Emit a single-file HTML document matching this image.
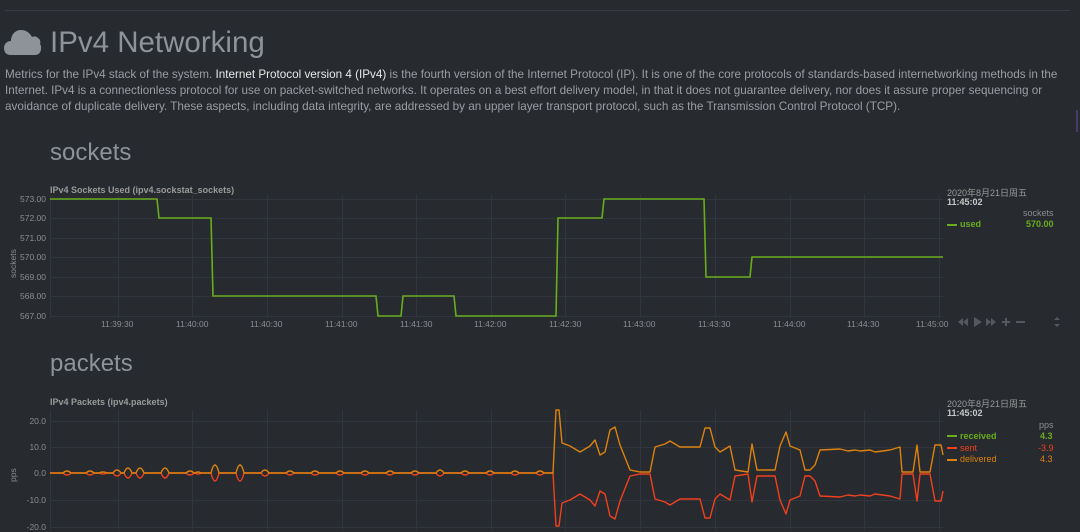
<!DOCTYPE html>
<html><head><meta charset="utf-8"><style>
body{margin:0;width:1080px;height:531px;overflow:hidden;background:#272a2f;font-family:"Liberation Sans","Noto Sans CJK SC",sans-serif;position:relative;color:#9a9da2}
.a{position:absolute;white-space:nowrap}
.p{font-size:11.7px;line-height:16px;color:#9a9da2}
.p b{color:#e8e8e8;font-weight:normal}
.h{font-size:24px;color:#8d9399}
.t{font-size:9px;font-weight:bold;color:#9a9a9a}
.y{font-size:8.5px;color:#8a8d92;text-align:right;width:44px}
.x{font-size:8.5px;color:#8a8d92}
.lg{font-size:9px}
</style></head><body>
<div class="a" style="left:5px;top:10px;width:1065px;height:1px;background:#3a3e44"></div>
<svg class="a" style="left:4px;top:28px" width="38" height="28" viewBox="0 0 38 28"><path d="M7 27 C2 27 0 24 0 20 C0 16 3 13 7 13 C7 7 11 2 17 2 C22 2 26 5 28 9 C30 8 32 8 34 10 C36 11 37 14 36 16 C38 18 38 27 31 27 Z" fill="#8d9399"/></svg>
<div class="a" style="left:50px;top:26px;font-size:29.5px;color:#8d9399">IPv4 Networking</div>
<div class="a p" style="left:5px;top:67px;white-space:normal;width:1068px">Metrics for the IPv4 stack of the system. <b>Internet Protocol version 4 (IPv4)</b> is the fourth version of the Internet Protocol (IP). It is one of the core protocols of standards-based internetworking methods in the Internet. IPv4 is a connectionless protocol for use on packet-switched networks. It operates on a best effort delivery model, in that it does not guarantee delivery, nor does it assure proper sequencing or avoidance of duplicate delivery. These aspects, including data integrity, are addressed by an upper layer transport protocol, such as the Transmission Control Protocol (TCP).</div>
<div class="a" style="left:1076px;top:110px;width:2px;height:22px;background:#4a3a6a"></div>

<div class="a h" style="left:50px;top:139px">sockets</div>
<div class="a t" style="left:50px;top:185px">IPv4 Sockets Used (ipv4.sockstat_sockets)</div>
<div class="a h" style="left:50px;top:350px">packets</div>
<div class="a t" style="left:50px;top:397px">IPv4 Packets (ipv4.packets)</div>

<svg class="a" style="left:0;top:0" width="1080" height="531">
<g stroke="#31363c" stroke-width="1">
<line x1="50" y1="199.5" x2="943" y2="199.5"/><line x1="50" y1="218.5" x2="943" y2="218.5"/><line x1="50" y1="238.5" x2="943" y2="238.5"/><line x1="50" y1="257.5" x2="943" y2="257.5"/><line x1="50" y1="277.5" x2="943" y2="277.5"/><line x1="50" y1="296.5" x2="943" y2="296.5"/><line x1="50" y1="316.5" x2="943" y2="316.5"/>
<line x1="50" y1="421.5" x2="943" y2="421.5"/><line x1="50" y1="447.5" x2="943" y2="447.5"/><line x1="50" y1="500.5" x2="943" y2="500.5"/><line x1="50" y1="527.5" x2="943" y2="527.5"/>
</g>
<g stroke="#31363c" stroke-width="1">
<path d="M50.5 195V318M118.5 195V318M192.5 195V318M267.5 195V318M342.5 195V318M416.5 195V318M491.5 195V318M565.5 195V318M640.5 195V318M715.5 195V318M790.5 195V318M864.5 195V318M939.5 195V318"/>
<path d="M50.5 410V531M118.5 410V531M192.5 410V531M267.5 410V531M342.5 410V531M416.5 410V531M491.5 410V531M565.5 410V531M640.5 410V531M715.5 410V531M790.5 410V531M864.5 410V531M939.5 410V531"/>
</g>
<path d="M50 199H157L159 218H211L213 296H376L378 316H401L403 296H454L456 316H556L558 218H602L604 199H704L706 277H750L752 257H943" fill="none" stroke="#6aac1e" stroke-width="1.6"/>
<path d="M50 473L63 473Q67 477 71 473L86 473Q90 477 94 473L99 473Q103 475 107 473L113 473Q117 479 121 473L124 473Q128 483 132 473L136 473Q140 483 144 473L161 473Q165 483 169 473L186 473Q190 477 194 473L195 473Q198 475 201 473L211 473Q215 489 219 473L236 473Q240 489 244 473L261 473Q265 479 269 473L286 473Q290 477 294 473L311 473Q315 477 319 473L336 473Q340 477 344 473L361 473Q365 477 369 473L386 473Q390 477 394 473L411 473Q415 477 419 473L436 473Q440 479 444 473L461 473Q465 477 469 473L486 473Q490 477 494 473L511 473Q515 477 519 473L536 473Q540 477 544 473L553 473 L556 526 559 526 562 503 570 500 580 494 590 500 595 506 600 491 605 494 610 516 615 519 620 501 630 476 640 474 650 474 655 499 665 502 670 505 680 499 690 499 700 499 705 518 710 518 715 499 720 494 730 500 735 476 748 474 752 502 757 476 775 476 780 500 786 514 790 500 800 496 805 476 810 476 815 481 820 496 840 497 848 495 855 496 860 495 870 496 875 494 890 496 900 499 902 474 913 474 917 501 920 474 930 474 935 501 941 501 943 491" fill="none" stroke="#f0401e" stroke-width="1.4" stroke-linejoin="round"/>
<path d="M50 473L63 473Q67 469 71 473L86 473Q90 469 94 473L99 473Q103 471 107 473L113 473Q117 467 121 473L124 473Q128 463 132 473L136 473Q140 463 144 473L161 473Q165 463 169 473L186 473Q190 469 194 473L195 473Q198 471 201 473L211 473Q215 457 219 473L236 473Q240 457 244 473L261 473Q265 467 269 473L286 473Q290 469 294 473L311 473Q315 469 319 473L336 473Q340 469 344 473L361 473Q365 469 369 473L386 473Q390 469 394 473L411 473Q415 469 419 473L436 473Q440 467 444 473L461 473Q465 469 469 473L486 473Q490 469 494 473L511 473Q515 469 519 473L536 473Q540 469 544 473L553 473 L556 410 559 410 562 443 570 446 580 452 590 446 595 440 600 455 605 452 610 430 615 427 620 445 630 470 640 472 650 472 655 447 665 444 670 441 680 447 690 447 700 447 705 428 710 428 715 447 720 452 730 446 735 470 748 472 752 444 757 470 775 470 780 446 786 432 790 446 800 450 805 470 810 470 815 465 820 450 840 449 848 451 855 450 860 451 870 450 875 452 890 450 900 447 902 472 913 472 917 445 920 472 930 472 935 445 941 445 943 455" fill="none" stroke="#dc820e" stroke-width="1.4" stroke-linejoin="round"/>
<g fill="#55595f">
<path d="M958 322l5 4v-8zM963 322l5 4v-8z"/><path d="M974 317l8 5-8 5z"/><path d="M986 318l5 4-5 4zM991 318l5 4-5 4z"/><path d="M1002 321h8v2h-8zM1005 318h2v8h-2z"/><path d="M1016 321h9v2h-9z"/><path d="M1054 320l3-3 3 3zM1054 324l3 3 3-3z"/>
</g>
</svg>
<div class="a x" style="left:8px;transform:rotate(-90deg);transform-origin:left top;top:278px">sockets</div>
<div class="a y" style="left:2px;top:194px">573.00</div>
<div class="a y" style="left:2px;top:213px">572.00</div>
<div class="a y" style="left:2px;top:233px">571.00</div>
<div class="a y" style="left:2px;top:252px">570.00</div>
<div class="a y" style="left:2px;top:272px">569.00</div>
<div class="a y" style="left:2px;top:291px">568.00</div>
<div class="a y" style="left:2px;top:311px">567.00</div>
<div class="a x" style="left:101px;top:319px">11:39:30</div>
<div class="a x" style="left:176px;top:319px">11:40:00</div>
<div class="a x" style="left:250px;top:319px">11:40:30</div>
<div class="a x" style="left:325px;top:319px">11:41:00</div>
<div class="a x" style="left:400px;top:319px">11:41:30</div>
<div class="a x" style="left:474px;top:319px">11:42:00</div>
<div class="a x" style="left:549px;top:319px">11:42:30</div>
<div class="a x" style="left:623px;top:319px">11:43:00</div>
<div class="a x" style="left:698px;top:319px">11:43:30</div>
<div class="a x" style="left:773px;top:319px">11:44:00</div>
<div class="a x" style="left:847px;top:319px">11:44:30</div>
<div class="a x" style="left:916px;top:319px">11:45:00</div>

<div class="a lg" style="left:947px;top:186px;color:#9a9a9a">2020年8月21日周五</div>
<div class="a lg" style="left:947px;top:197px;color:#c8c8c8;font-weight:bold">11:45:02</div>
<div class="a lg" style="left:1023px;top:208px;color:#8a8d92">sockets</div>
<div class="a" style="left:947px;top:224px;width:10px;height:2px;background:#6aac1e"></div>
<div class="a lg" style="left:960px;top:219px;color:#6aac1e;font-weight:bold">used</div>
<div class="a lg" style="left:1026px;top:219px;color:#6aac1e;font-weight:bold">570.00</div>

<div class="a x" style="left:8px;top:482px;transform:rotate(-90deg);transform-origin:left top">pps</div>
<div class="a y" style="left:2px;top:416px">20.0</div>
<div class="a y" style="left:2px;top:442px">10.0</div>
<div class="a y" style="left:2px;top:468px">0.0</div>
<div class="a y" style="left:2px;top:495px">-10.0</div>
<div class="a y" style="left:2px;top:522px">-20.0</div>

<div class="a lg" style="left:947px;top:397px;color:#9a9a9a">2020年8月21日周五</div>
<div class="a lg" style="left:947px;top:408px;color:#c8c8c8;font-weight:bold">11:45:02</div>
<div class="a lg" style="left:1039px;top:420px;color:#8a8d92">pps</div>
<div class="a" style="left:947px;top:435px;width:10px;height:2px;background:#6aac1e"></div>
<div class="a lg" style="left:960px;top:431px;color:#6aac1e;font-weight:bold">received</div>
<div class="a lg" style="left:1040px;top:431px;color:#6aac1e;font-weight:bold">4.3</div>
<div class="a" style="left:947px;top:447px;width:10px;height:2px;background:#f0401e"></div>
<div class="a lg" style="left:960px;top:443px;color:#f0401e">sent</div>
<div class="a lg" style="left:1038px;top:443px;color:#f0401e">-3.9</div>
<div class="a" style="left:947px;top:459px;width:10px;height:2px;background:#dc820e"></div>
<div class="a lg" style="left:960px;top:454px;color:#dc820e">delivered</div>
<div class="a lg" style="left:1040px;top:454px;color:#dc820e">4.3</div>
</body></html>
